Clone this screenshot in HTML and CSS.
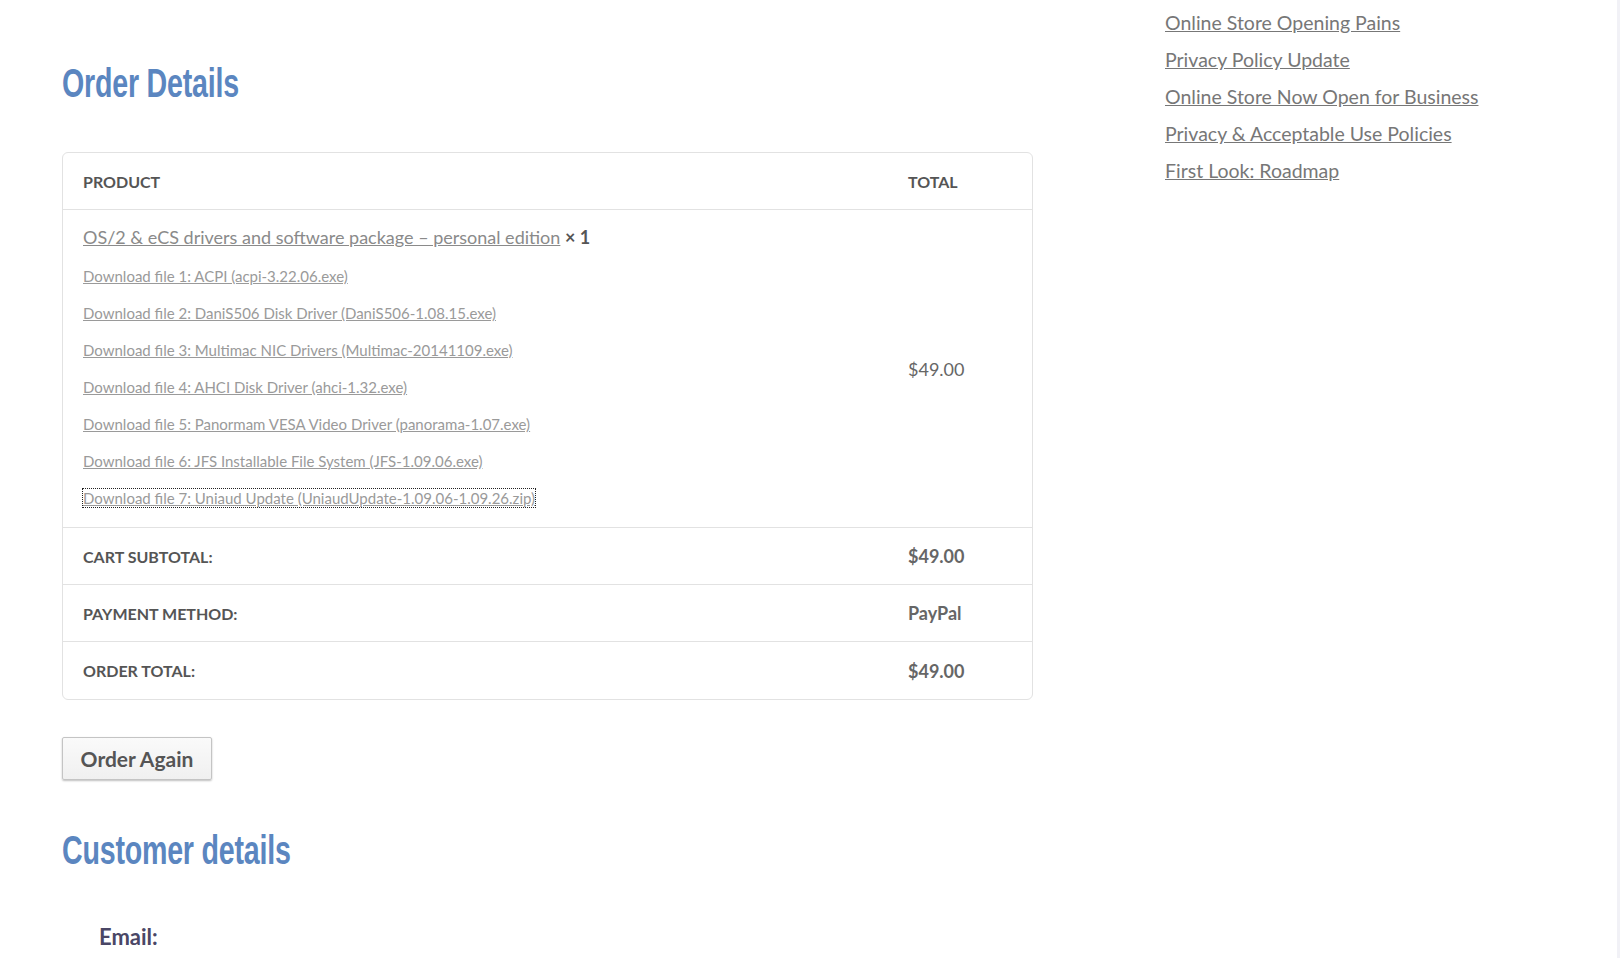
FILE: index.html
```html
<!DOCTYPE html>
<html lang="en">
<head>
    <meta charset="UTF-8">
    <title>Order Details</title>
    <link rel="stylesheet" href="styles.css">
</head>
<body>
    <div class="page">
        <main class="content">
            <h2 class="section-title">Order Details</h2>

            <div class="order-table">
                <div class="row head">
                    <div class="cell label">Product</div>
                    <div class="cell value">Total</div>
                </div>

                <div class="row item">
                    <div class="cell">
                        <p class="product-line"><a href="#">OS/2 &amp; eCS drivers and software package &ndash; personal edition</a> <strong>&times; 1</strong></p>
                        <ul class="downloads">
                            <li><a href="#">Download file 1: ACPI (acpi-3.22.06.exe)</a></li>
                            <li><a href="#">Download file 2: DaniS506 Disk Driver (DaniS506-1.08.15.exe)</a></li>
                            <li><a href="#">Download file 3: Multimac NIC Drivers (Multimac-20141109.exe)</a></li>
                            <li><a href="#">Download file 4: AHCI Disk Driver (ahci-1.32.exe)</a></li>
                            <li><a href="#">Download file 5: Panormam VESA Video Driver (panorama-1.07.exe)</a></li>
                            <li><a href="#">Download file 6: JFS Installable File System (JFS-1.09.06.exe)</a></li>
                            <li><a href="#" class="focused">Download file 7: Uniaud Update (UniaudUpdate-1.09.06-1.09.26.zip)</a></li>
                        </ul>
                    </div>
                    <div class="cell value price">$49.00</div>
                </div>

                <div class="row foot">
                    <div class="cell label">Cart Subtotal:</div>
                    <div class="cell value strong">$49.00</div>
                </div>
                <div class="row foot">
                    <div class="cell label">Payment Method:</div>
                    <div class="cell value strong">PayPal</div>
                </div>
                <div class="row foot last">
                    <div class="cell label">Order Total:</div>
                    <div class="cell value strong">$49.00</div>
                </div>
            </div>

            <button class="btn">Order Again</button>

            <h2 class="section-title customer">Customer details</h2>

            <dl class="customer-details">
                <dt>Email:</dt>
            </dl>
        </main>

        <aside class="sidebar">
            <ul class="recent-posts">
                <li><a href="#">Online Store Opening Pains</a></li>
                <li><a href="#">Privacy Policy Update</a></li>
                <li><a href="#">Online Store Now Open for Business</a></li>
                <li><a href="#">Privacy &amp; Acceptable Use Policies</a></li>
                <li><a href="#">First Look: Roadmap</a></li>
            </ul>
        </aside>
    </div>
</body>
</html>
```

FILE: styles.css
```css
:root {
    --heading-color: #5b86c0;
    --text-color: #666666;
    --link-color: #777777;
    --muted-link: #9a9a9a;
    --border-color: #e2e2e2;
}

* {
    margin: 0;
    padding: 0;
    box-sizing: border-box;
}

html {
    background-color: #f1f1f6;
}

body {
    font-family: Lato, 'Open Sans', sans-serif;
    color: var(--text-color);
    background-color: #ffffff;
    margin-right: 3px;
    min-height: 958px;
}

a {
    color: var(--link-color);
}

ul {
    list-style: none;
}

.page {
    display: flex;
    padding-left: 62px;
}

.content {
    width: 971px;
    padding-top: 58px;
}

/* no narrow face installed, so squeeze the bold sans */
.section-title {
    font-family: 'Liberation Sans', Arial, sans-serif;
    font-weight: 700;
    font-size: 40px;
    line-height: 50px;
    letter-spacing: -0.3px;
    color: var(--heading-color);
    margin-bottom: 44px;
    transform: scaleX(0.715);
    transform-origin: left center;
}

/* order table */

.order-table {
    border: 1px solid var(--border-color);
    border-radius: 6px;
}

.row {
    display: flex;
    border-bottom: 1px solid var(--border-color);
}

.row.last {
    border-bottom: none;
}

.cell {
    padding: 0 20px;
    display: flex;
    align-items: center;
}

.row .cell:first-child {
    flex: 1;
}

.cell.value {
    width: 144px;
}

.head,
.foot {
    height: 57px;
}

.label,
.head .value {
    font-size: 16px;
    font-weight: 700;
    text-transform: uppercase;
    color: #555555;
}

.item .cell:first-child {
    display: block;
    padding-top: 14px;
    padding-bottom: 10px;
}

.product-line {
    font-size: 18px;
    line-height: 26px;
    color: #555555;
}

.product-line a {
    color: #8a8a8a;
}

.downloads {
    margin-top: 8px;
}

.downloads li {
    font-size: 15px;
    line-height: 37px;
}

.downloads a {
    color: var(--muted-link);
}

.downloads a.focused {
    outline: 1px dotted #222222;
}

.price {
    font-size: 18px;
    color: #666666;
}

.strong {
    font-size: 18px;
    font-weight: 700;
    color: #666666;
}

/* button */

.btn {
    margin-top: 37px;
    font-family: inherit;
    font-size: 21px;
    font-weight: 700;
    color: #555555;
    background: linear-gradient(#fafafa, #f0f0f0);
    border: 1px solid #c4c4c4;
    border-radius: 2px;
    box-shadow: 0 1px 2px rgba(0, 0, 0, 0.25);
    width: 150px;
    height: 43px;
    cursor: pointer;
}

.section-title.customer {
    margin-top: 45px;
    margin-bottom: 48px;
}

.customer-details {
    padding-left: 37px;
}

.customer-details dt {
    font-size: 22px;
    font-weight: 700;
    color: #4a4766;
}

/* sidebar */

.sidebar {
    margin-left: 132px;
    padding-top: 4px;
}

.recent-posts li {
    font-size: 19.5px;
    line-height: 37px;
}
```
